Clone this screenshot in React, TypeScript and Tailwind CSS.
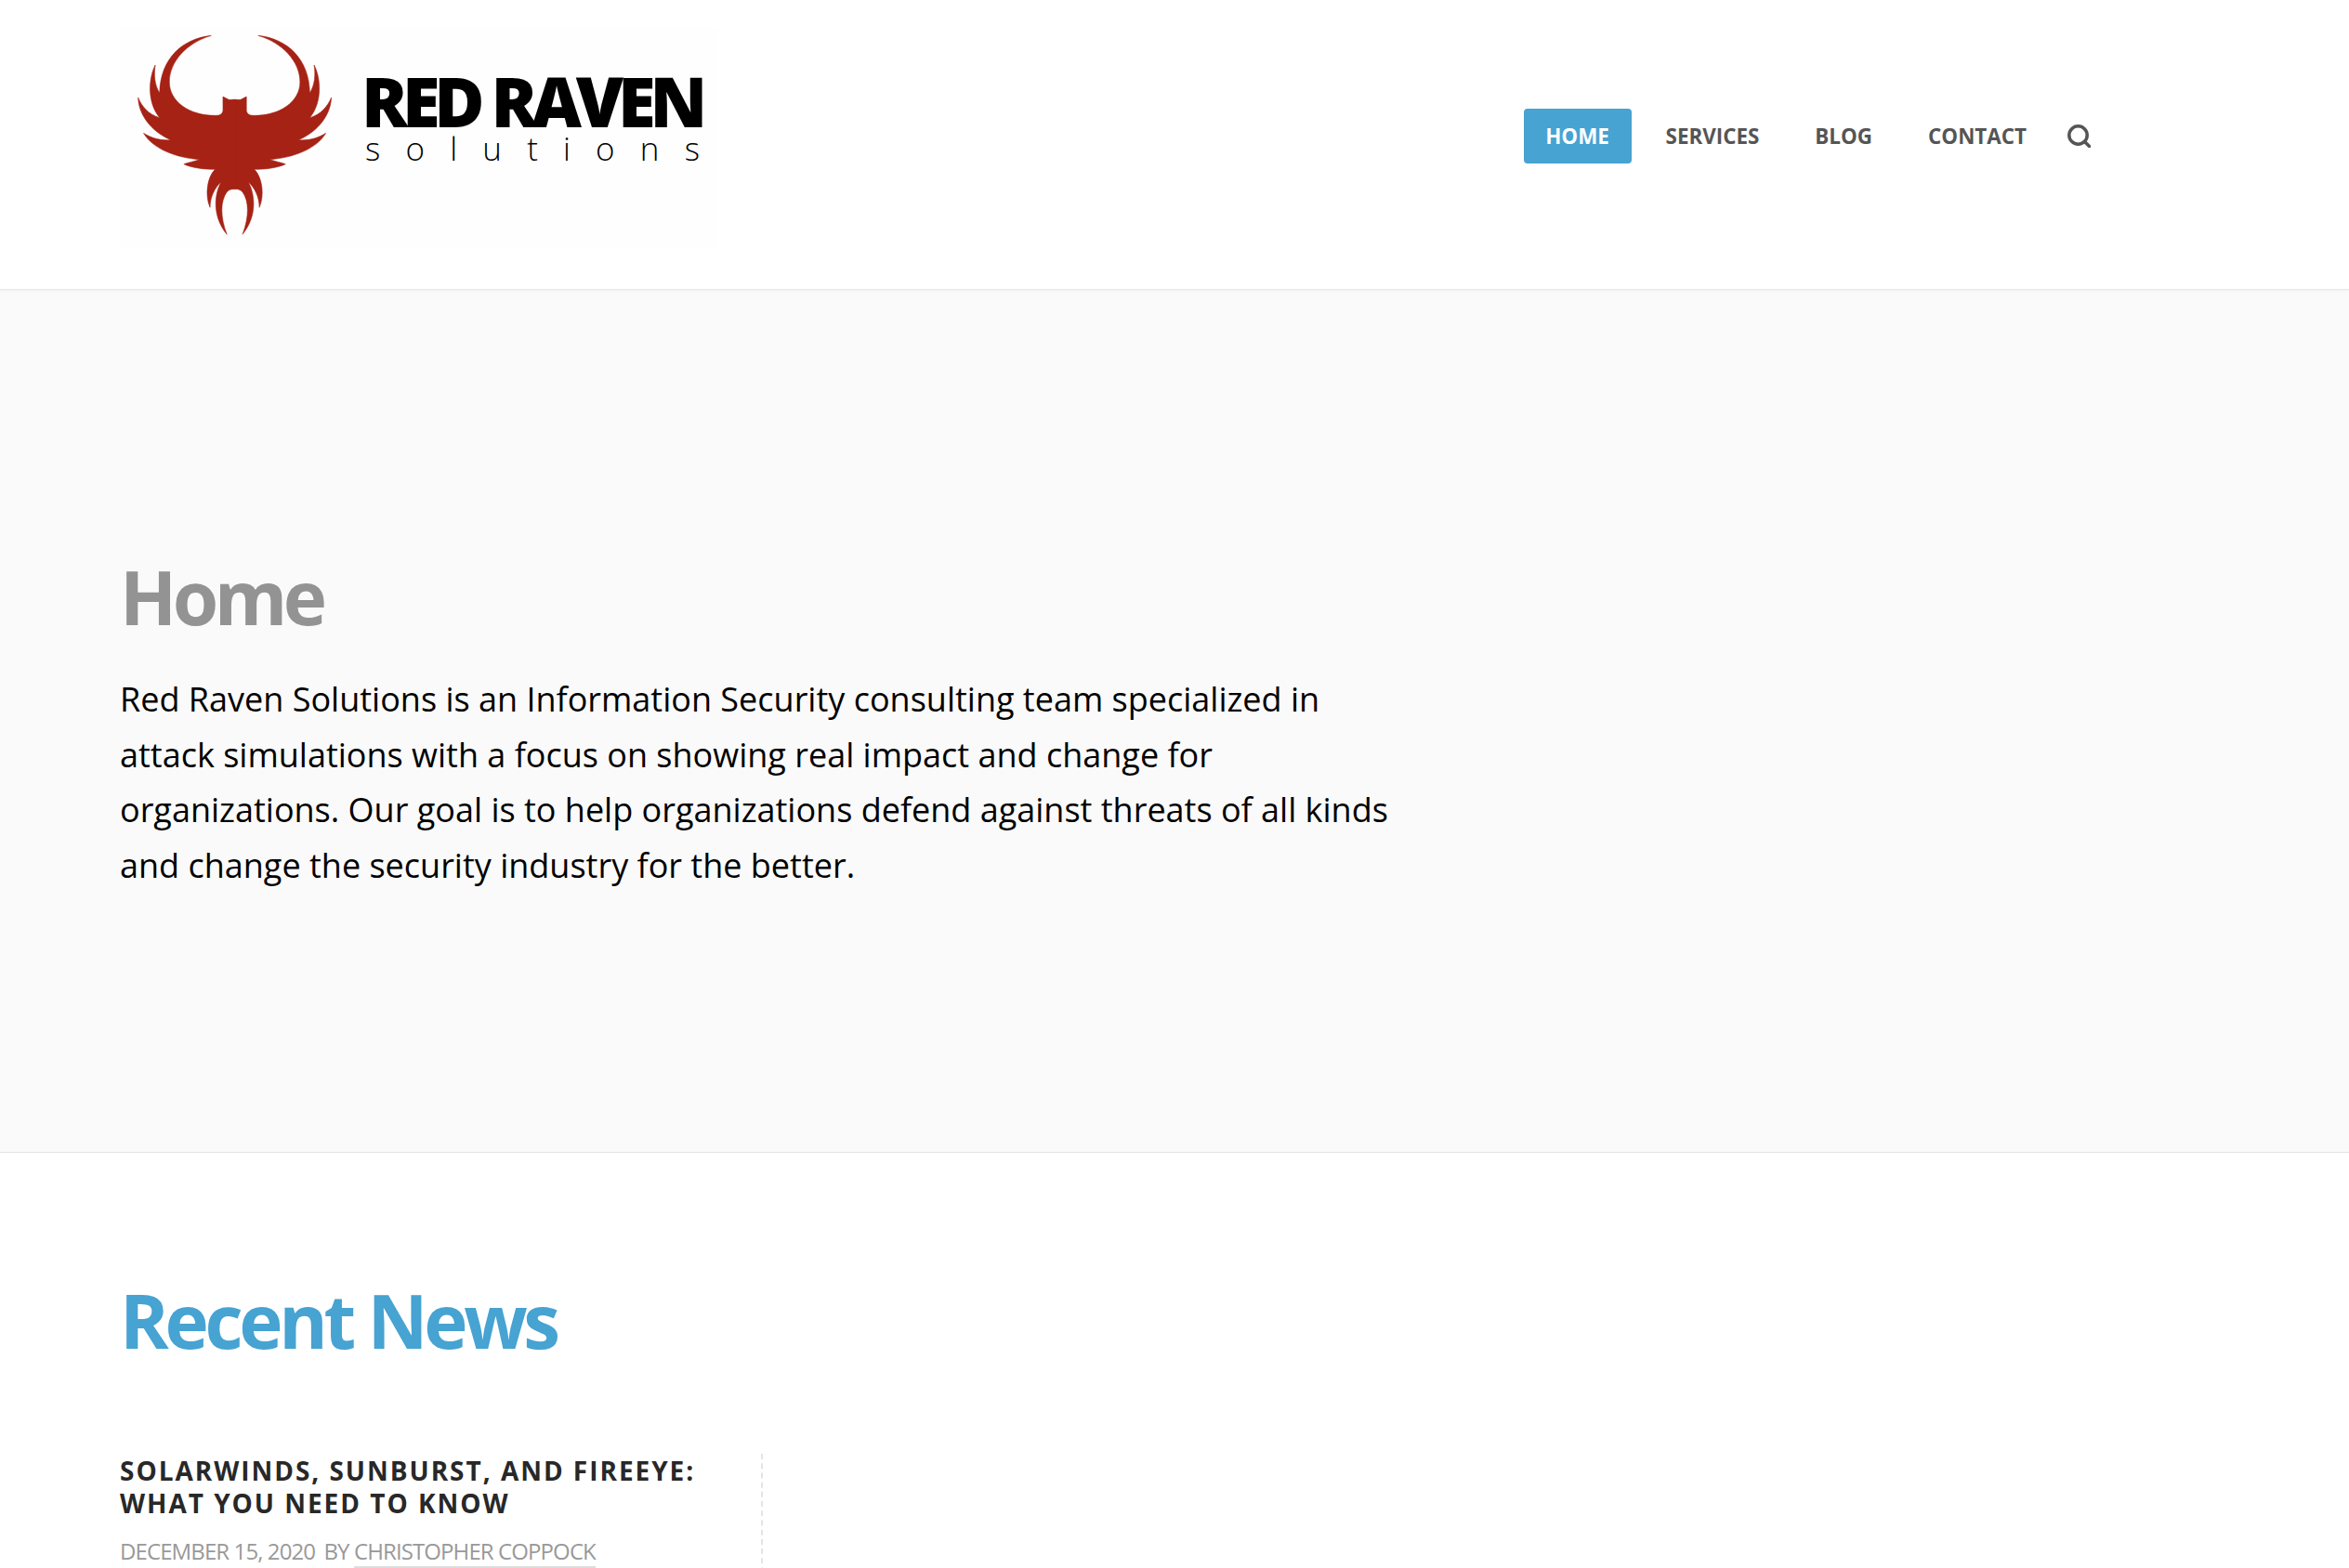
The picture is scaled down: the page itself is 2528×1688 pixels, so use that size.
const PHOENIX = "M310 262 L330 262 L345 252 L345 298 Q347 313 362 313 C428 315 482 270 482 205 C482 140 438 78 375 55 C450 65 505 130 507 240 C520 215 522 180 518 150 C535 190 540 270 507 320 C535 310 552 285 562 255 C560 320 520 370 478 392 C505 395 530 385 548 370 C525 420 465 450 405 455 C420 462 435 465 445 470 C425 482 395 487 365 487 C385 510 392 570 378 610 C378 575 365 545 350 528 C368 570 372 640 335 697 C352 640 352 590 335 560 C330 552 322 550 310 550 Z";

function Logo() {
  return (
    <div className="relative w-[660px] h-[260px] shrink-0">
      <svg viewBox="0 0 1568 780" preserveAspectRatio="none" className="absolute inset-0 w-full h-full">
        <rect x="20" y="30" width="1530" height="710" fill="#fefefe" />
        <path d={PHOENIX} fill="#a52215" stroke="#a52215" strokeWidth="1.5" />
        <path d={PHOENIX} fill="#a52215" stroke="#a52215" strokeWidth="1.5" transform="translate(630 0) scale(-1 1)" />
      </svg>
      <div className="absolute left-[269px] top-[60px] text-[74px] leading-[58px] font-extrabold tracking-[-6.2px] text-black whitespace-nowrap">RED RAVEN</div>
      <div className="absolute left-[273px] top-[122px] w-[360px] flex justify-between text-[35px] leading-[36px] font-light text-black">
        {"solutions".split("").map((c, i) => (<span key={i}>{c}</span>))}
      </div>
    </div>
  );
}

function SearchGlyph() {
  return (
    <svg viewBox="0 0 25 25" className="w-[25px] h-[25px] ml-[44px]" fill="none" stroke="#555" strokeWidth="3.5" strokeLinecap="round">
      <circle cx="11.5" cy="11.5" r="9.7" />
      <path d="M19 19 L23.5 23.5" />
    </svg>
  );
}

export default function App() {
  return (
    <div className="h-[1688px] overflow-hidden bg-white" style={{ fontFamily: '"Open Sans", sans-serif' }}>
      <header className="h-[312px] bg-white border-b border-[#e8e8e8] shadow-[0_1px_3px_rgba(0,0,0,0.05)] relative pl-[120px] pt-[20px]">
        <div className="w-[2130px] flex justify-between items-start">
          <Logo />
          <nav className="mt-[97px] flex items-center text-[22.4px] font-bold text-[#555] uppercase">
            <a className="h-[59px] w-[116px] flex items-center justify-center rounded-[4px] bg-[#46a3d2] text-white">Home</a>
            <a className="ml-[37px]">Services</a>
            <a className="ml-[60px]">Blog</a>
            <a className="ml-[60px]">Contact</a>
            <SearchGlyph />
          </nav>
        </div>
      </header>
      <section className="h-[929px] bg-[#fafafa] border-b border-[#e1e1e1] pl-[129px] pt-[280px]">
        <h1 className="text-[80px] leading-[100px] font-bold tracking-[-4.5px] text-[#939393]">Home</h1>
        <p className="mt-[31px] w-[1400px] text-[36px] leading-[59.5px] text-black">
          Red Raven Solutions is an Information Security consulting team specialized in attack simulations with a focus on showing real impact and change for organizations. Our goal is to help organizations defend against threats of all kinds and change the security industry for the better.
        </p>
      </section>
      <section className="pl-[129px] pt-[130px]">
        <h2 className="text-[80px] leading-[100px] font-bold tracking-[-4.3px] text-[#46a3d2]">Recent News</h2>
        <div className="mt-[94px] w-[692px] h-[200px] border-r-2 border-dashed border-[#e4e4e4] pr-[50px] pt-[1px]">
          <h3 className="text-[28px] leading-[35px] font-bold tracking-[1.97px] uppercase text-[#282828]">SolarWinds, Sunburst, and FireEye: What You Need to Know</h3>
          <p className="mt-[18px] text-[24px] leading-[32px] tracking-[-0.9px] uppercase text-[#999]">
            December 15, 2020 <span className="ml-[4px]">by</span> <a className="border-b-2 border-[#ddd]">Christopher Coppock</a>
          </p>
        </div>
      </section>
    </div>
  );
}
